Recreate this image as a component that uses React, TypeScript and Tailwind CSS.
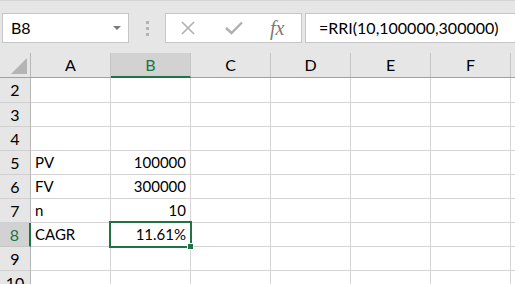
import React from "react";

const COLS = ["A", "B", "C", "D", "E", "F"];

type Row = { n: number; a?: string; b?: string };
const ROWS: Row[] = [
  { n: 2 },
  { n: 3 },
  { n: 4 },
  { n: 5, a: "PV", b: "100000" },
  { n: 6, a: "FV", b: "300000" },
  { n: 7, a: "n", b: "10" },
  { n: 8, a: "CAGR", b: "11.61%" },
  { n: 9 },
  { n: 10 },
];

export default function App() {
  return (
    <div
      className="relative w-[515px] h-[284px] overflow-hidden bg-white text-black"
      style={{ fontFamily: "Lato, 'Open Sans', sans-serif" }}
    >
      {/* Formula bar area */}
      <div className="h-[53px] bg-[#e6e6e6] border-t border-[#d6d6d6] flex items-start pt-[12px]">
        {/* Name box */}
        <div className="ml-[2px] w-[127px] h-[30px] bg-white border border-[#c6c6c6] flex items-center justify-between pl-[8px] pr-[7px]">
          <span className="text-[16px] leading-none">B8</span>
          <svg width="8" height="5" viewBox="0 0 8 5">
            <path d="M0 0 L8 0 L4 4 Z" fill="#7a7a7a" />
          </svg>
        </div>
        {/* Grip dots */}
        <div className="ml-[17px] mt-[8px] flex flex-col gap-[3px]">
          <div className="w-[3px] h-[3px] bg-[#b4b4b4]" />
          <div className="w-[3px] h-[3px] bg-[#b4b4b4]" />
          <div className="w-[3px] h-[3px] bg-[#b4b4b4]" />
        </div>
        {/* X check fx */}
        <div className="ml-[16px] w-[137px] h-[30px] bg-white border border-[#c6c6c6] flex items-center">
          <svg className="ml-[14px]" width="16" height="16" viewBox="0 0 16 16">
            <path d="M2 2 L14 14 M14 2 L2 14" stroke="#b0b0b0" strokeWidth="1.6" fill="none" />
          </svg>
          <svg className="ml-[29px]" width="18" height="14" viewBox="0 0 18 14">
            <path d="M1 7 L6.5 12 L17 1.5" stroke="#b0b0b0" strokeWidth="2.4" fill="none" />
          </svg>
          <span
            className="ml-[27px] text-[20px] italic leading-none text-[#7a7a7a]"
            style={{ fontFamily: "'Liberation Serif', serif" }}
          >
            fx
          </span>
        </div>
        {/* Formula input */}
        <div className="ml-[3px] flex-1 h-[30px] bg-white border border-[#c6c6c6] border-r-0 flex items-center pl-[13px]">
          <span className="text-[16px] leading-none">=RRI(10,100000,300000)</span>
        </div>
      </div>

      {/* Column header */}
      <div className="flex h-[25px] bg-[#e6e6e6] border-b border-[#a0a0a0]">
        <div className="w-[31px] h-full border-r border-[#b8b8b8] relative">
          <svg className="absolute left-[11px] top-[5px]" width="16" height="16" viewBox="0 0 16 16">
            <path d="M16 0 L16 16 L0 16 Z" fill="#b4b4b4" />
          </svg>
        </div>
        {COLS.map((c) => {
          const sel = c === "B";
          return (
            <div
              key={c}
              className={
                sel
                  ? "w-[80px] h-[25px] -mb-px bg-[#d2d2d2] border-r border-[#c6c6c6] border-b-2 border-b-[#217346] flex items-center justify-center text-[16px] text-[#217346]"
                  : "w-[80px] h-full border-r border-[#c6c6c6] flex items-center justify-center text-[16px]"
              }
            >
              {c}
            </div>
          );
        })}
        <div className="flex-1" />
      </div>

      {/* Rows */}
      {ROWS.map((r, i) => {
        const sel = r.n === 8;
        const h = i === 0 ? "h-[25px]" : "h-[24px]";
        return (
          <div key={r.n} className={`flex ${h}`}>
            <div
              className={
                sel
                  ? "w-[31px] h-full bg-[#d2d2d2] border-r-2 border-[#217346] border-b border-b-[#c6c6c6] flex items-center justify-center text-[16px] text-[#217346]"
                  : "w-[31px] h-full bg-[#e6e6e6] border-r border-[#b8b8b8] border-b border-b-[#d0d0d0] flex items-center justify-center text-[16px]"
              }
            >
              {r.n}
            </div>
            <div className="w-[80px] h-full border-r border-b border-[#d4d4d4] flex items-center pl-[4px] text-[15px]">
              {r.a}
            </div>
            <div className="w-[80px] h-full border-r border-b border-[#d4d4d4] flex items-center justify-end pr-[4px] text-[15px]">
              {r.b}
            </div>
            {["C", "D", "E", "F"].map((c) => (
              <div key={c} className="w-[80px] h-full border-r border-b border-[#d4d4d4]" />
            ))}
            <div className="flex-1 h-full border-b border-[#d4d4d4]" />
          </div>
        );
      })}

      {/* Selection of B8 */}
      <div className="absolute left-[109px] top-[221px] w-[83px] h-[27px] border-2 border-[#217346] pointer-events-none" />
      <div className="absolute left-[187px] top-[243px] w-[7px] h-[7px] bg-[#217346] border border-white" />
    </div>
  );
}
